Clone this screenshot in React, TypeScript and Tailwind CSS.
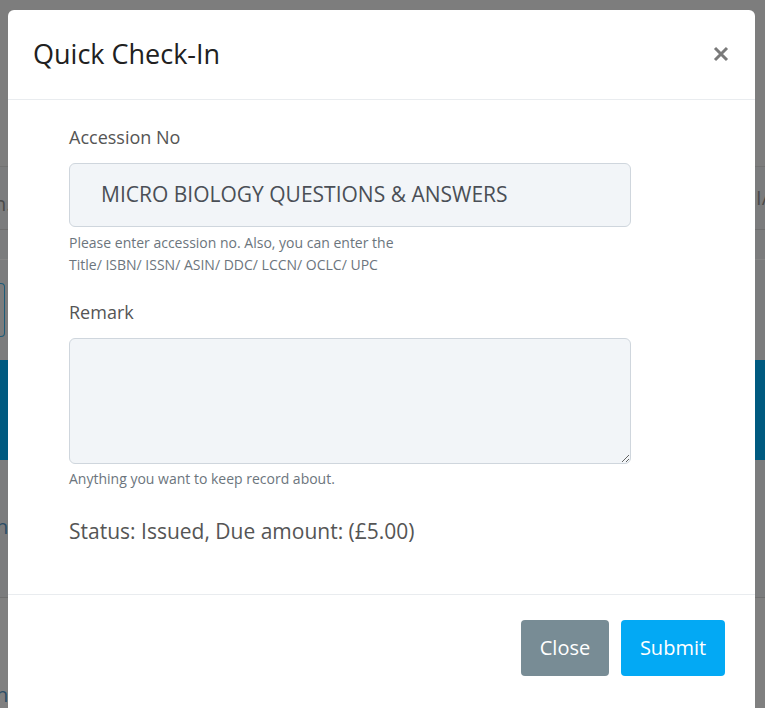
import React from "react";

export default function App() {
  return (
    <div
      className="relative h-[708px] w-[765px] overflow-hidden bg-[#7b7c7d]"
      style={{ fontFamily: '"Open Sans", "Noto Sans", sans-serif' }}
    >
      {/* background page under overlay */}
      <div className="flex flex-col">
        <div className="h-[167px] border-b border-[#727272] bg-[#7d7d7d]" />
        <div className="flex h-[63px] items-center justify-between border-b border-[#6f6f6f] text-[20px] text-[#4a4a4a]">
          <span className="-ml-[6px] mt-[12px]">n.</span>
          <span className="-mr-[4px]">I/</span>
        </div>
        <div className="h-[30px] border-b border-[#858585]" />
        <div className="flex h-[100px] items-center">
          <div className="h-[54px] w-[5px] rounded-r-[4px] border border-l-0 border-[#1d5b78]" />
        </div>
        <div className="flex h-[100px] items-center bg-[#005a80] text-[20px] text-[#2b6d8e]">
          <span className="-ml-[4px]">l</span>
        </div>
        <div className="flex h-[138px] flex-col justify-start gap-[5px] border-b border-[#6f6f6f] pt-[26px] text-[20px] leading-[24px] text-[#2b4d66]">
          <span className="-ml-[4px]">l</span>
          <span className="-ml-[4px]">h</span>
        </div>
        <div className="flex h-[200px] flex-col gap-[5px] bg-[#808080] pt-[56px] text-[20px] leading-[24px] text-[#2b4d66]">
          <span className="-ml-[4px]">l</span>
          <span className="-ml-[4px]">h</span>
        </div>
      </div>

      {/* modal */}
      <div className="absolute left-[8px] top-[10px] w-[747px] rounded-[6px] bg-white">
        <div className="flex h-[90px] items-center justify-between border-b border-[#e9ecef] pl-[25px] pr-[26px]">
          <h1 className="text-[27px] font-normal text-[#212121]">Quick Check-In</h1>
          <svg width="16" height="16" viewBox="0 0 16 16" className="mt-[-2px]">
            <path d="M2 2 L14 14 M14 2 L2 14" stroke="#7a7a7a" strokeWidth="3" strokeLinecap="butt" />
          </svg>
        </div>
        <div className="flex flex-col pb-[49px] pl-[61px] pt-[25px]">
          <label className="text-[18px] leading-[24px] text-[#555]">Accession No</label>
          <div className="mt-[14px] flex h-[64px] w-[562px] items-center rounded-[6px] border border-[#cfd6dd] bg-[#f2f5f8] pl-[31px] text-[21px] text-[#4a4f56]">
            MICRO BIOLOGY QUESTIONS &amp; ANSWERS
          </div>
          <p className="mt-[5px] text-[14px] leading-[22px] text-[#6c757d]">
            Please enter accession no. Also, you can enter the
            <br />
            Title/ ISBN/ ISSN/ ASIN/ DDC/ LCCN/ OCLC/ UPC
          </p>
          <label className="mt-[24px] text-[18px] leading-[24px] text-[#555]">Remark</label>
          <textarea
            className="mt-[14px] h-[126px] w-[562px] resize-y rounded-[6px] border border-[#cfd6dd] bg-[#f2f5f8] outline-none"
            readOnly
          />
          <p className="mt-[4px] text-[14px] leading-[22px] text-[#6c757d]">Anything you want to keep record about.</p>
          <p className="mt-[27px] text-[21px] leading-[28px] text-[#555]">Status: Issued, Due amount: (£5.00)</p>
        </div>
        <div className="flex h-[150px] items-start justify-end gap-[12px] border-t border-[#e9ecef] pr-[30px] pt-[25px]">
          <button className="h-[56px] w-[88px] rounded-[4px] bg-[#788c95] text-[20px] text-white">Close</button>
          <button className="h-[56px] w-[104px] rounded-[4px] bg-[#03a9f4] text-[20px] text-white">Submit</button>
        </div>
      </div>
    </div>
  );
}
